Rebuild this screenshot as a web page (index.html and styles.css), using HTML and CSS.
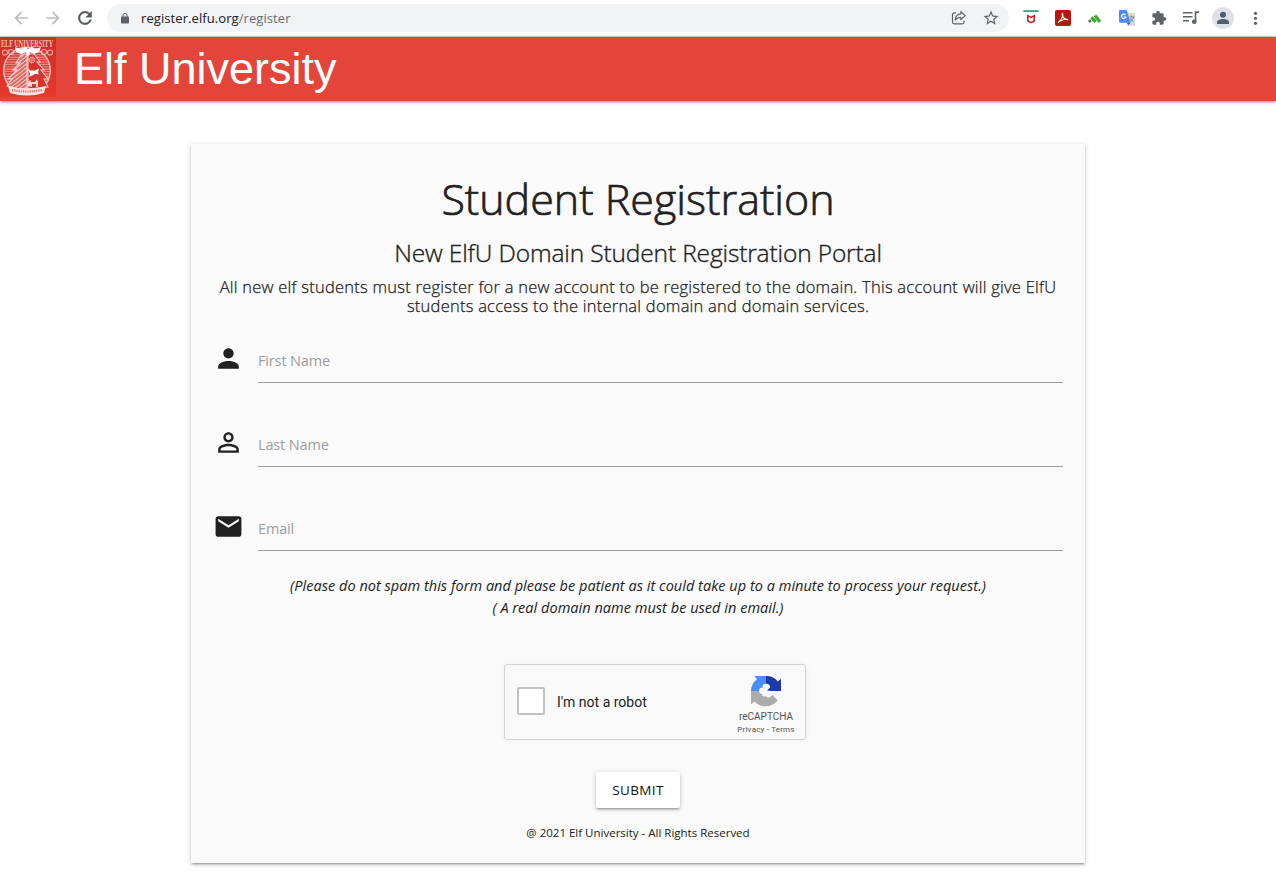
FILE: index.html
```html
<!DOCTYPE html>
<html lang="en">
<head>
<meta charset="utf-8">
<title>Elf University</title>
<link rel="stylesheet" href="styles.css">
</head>
<body>
<div class="toolbar">
  <div class="nav-buttons">
    <svg class="ic faded" viewBox="0 0 24 24"><path d="M20 11H7.83l5.59-5.59L12 4l-8 8 8 8 1.41-1.41L7.83 13H20v-2z"/></svg>
    <svg class="ic faded" viewBox="0 0 24 24"><path d="M12 4l-1.41 1.41L16.17 11H4v2h12.17l-5.58 5.59L12 20l8-8z"/></svg>
    <svg class="ic" viewBox="0 0 24 24"><path d="M17.65 6.35C16.2 4.9 14.21 4 12 4c-4.42 0-7.99 3.58-7.99 8s3.57 8 7.99 8c3.73 0 6.84-2.55 7.73-6h-2.08c-.82 2.33-3.04 4-5.65 4-3.31 0-6-2.69-6-6s2.69-6 6-6c1.66 0 3.14.69 4.22 1.78L13 11h7V4l-2.35 2.35z" stroke="#55595d" stroke-width=".5"/></svg>
  </div>
  <div class="omnibox">
    <svg class="lock" viewBox="0 0 24 24"><path d="M18 8h-1V6c0-2.76-2.24-5-5-5S7 3.24 7 6v2H6c-1.1 0-2 .9-2 2v10c0 1.1.9 2 2 2h12c1.1 0 2-.9 2-2V10c0-1.1-.9-2-2-2zM9 8V6c0-1.66 1.34-3 3-3s3 1.34 3 3v2H9z"/></svg>
    <div class="url">register.elfu.org<span>/register</span></div>
    <svg class="share" viewBox="0 0 16 16" fill="none" stroke="#5f6368" stroke-width="1.2" stroke-linejoin="round"><path d="M5 2.8H3.3A1.8 1.8 0 0 0 1.500 4.600V12a1.800 1.800 0 0 0 1.800 1.800h8A1.800 1.800 0 0 0 13.100 12v-1.500"/><path d="M9.800 1.700 14.300 5.600 9.800 9.500V7.300C7.200 7.300 5.500 8.100 4.200 10 4.500 6.500 6.500 4.200 9.800 3.900z"/></svg>
    <svg class="star" viewBox="0 0 24 24"><path d="M22 9.240l-7.190-.62L12 2 9.190 8.630 2 9.240l5.460 4.730L5.820 21 12 17.270 18.180 21l-1.630-7.030L22 9.240zM12 15.400l-3.760 2.270 1-4.280-3.320-2.880 4.380-.38L12 6.100l1.710 4.040 4.380.38-3.320 2.880 1 4.280L12 15.400z"/></svg>
  </div>
  <div class="extensions">
    <svg viewBox="0 0 16 16"><path fill="#43a58a" d="M.3.1h15.400v2H.3z"/><path fill="#c8202f" d="M4 4.500l4 2 4-2V11.500l-4 2-4-2zM5.600 7v3.600L8 11.800l2.400-1.200V7L8 8.200z"/></svg>
    <svg viewBox="0 0 16 16"><rect width="16" height="16" rx="2" fill="#b3190c"/><path d="M3.300 12.500C5.500 11 8.700 6 7.700 3.400c-1.300 0-.2 6.300 5.100 6.400 0-1.500-6.800-.2-9.500 2.700z" fill="none" stroke="#fff" stroke-width="1.100" stroke-linejoin="round"/></svg>
    <svg viewBox="0 0 16 16"><circle cx="2.800" cy="10.900" r="1.500" fill="#5b6b60"/><path d="M4.500 7.300 8.500 12M8 5.500l5 6.500" fill="none" stroke="#3caa2d" stroke-width="3.200"/></svg>
    <svg viewBox="0 0 16 16"><path fill="#d5d7da" d="M6.500 3H16v12.700H9z"/><path fill="#4c8bf5" d="M1 0h6.700l3.800 12.800H1A1 1 0 0 1 0 11.800V1a1 1 0 0 1 1-1z"/><path fill="#3457c4" d="M8 12.800h3.500L9 15.600z"/><path d="M6.500 5A2.200 2.200 0 1 0 6.800 7H4.800" fill="none" stroke="#fff" stroke-width="1.100"/><path d="M10.500 7h4.700M12.800 5.800V7M14.500 7q-.8 3-3.500 4.500M11.200 8.500q1 2 3.300 3.300" fill="none" stroke="#71828b" stroke-width=".9"/></svg>
    <svg viewBox="0 0 24 24"><path fill="#5f6368" d="M20.500 11H19V7c0-1.100-.9-2-2-2h-4V3.500C13 2.120 11.880 1 10.500 1S8 2.120 8 3.500V5H4c-1.100 0-1.990.9-1.990 2v3.800H3.500c1.490 0 2.700 1.210 2.700 2.700s-1.210 2.700-2.700 2.700H2V20c0 1.100.9 2 2 2h3.800v-1.500c0-1.490 1.210-2.700 2.700-2.700 1.490 0 2.700 1.210 2.700 2.700V22H17c1.100 0 2-.9 2-2v-4h1.500c1.380 0 2.500-1.120 2.500-2.500S21.880 11 20.500 11z"/></svg>
    <svg viewBox="0 0 16 16"><path d="M0 2.700h9.500M0 6.700h9.500M0 10.700h6" stroke="#5f6368" stroke-width="1.600"/><path d="M12.500 12V2.200H16" fill="none" stroke="#5f6368" stroke-width="1.700"/><circle cx="11.200" cy="11.800" r="2.300" fill="#5f6368"/></svg>
    <svg class="avatar" viewBox="0 0 22 22"><circle cx="11" cy="11" r="11" fill="#dee1e6"/><circle cx="11" cy="7.800" r="3" fill="#4f5d75"/><path fill="#4f5d75" d="M5 17v-1.600c0-2.200 3.500-3.300 6-3.300s6 1.100 6 3.300V17z"/></svg>
    <svg viewBox="0 0 16 16" fill="#5f6368"><circle cx="8.500" cy="3.300" r="1.600"/><circle cx="8.500" cy="8.300" r="1.600"/><circle cx="8.500" cy="13.300" r="1.600"/></svg>
  </div>
</div>

<header class="banner">
  <svg class="crest" viewBox="0 0 56 60">
    <defs>
      <linearGradient id="red" x1="0" y1="0" x2="0" y2="1"><stop offset="0" stop-color="#c92f29"/><stop offset="1" stop-color="#e8382b"/></linearGradient>
      <pattern id="hatch" width="3" height="3" patternUnits="userSpaceOnUse" patternTransform="rotate(-38)"><path d="M0 1.500h3" stroke="#fff" stroke-width="1.500" opacity=".75"/></pattern>
      <pattern id="lines" width="3" height="2.400" patternUnits="userSpaceOnUse"><path d="M0 1h3" stroke="#fff" stroke-width="1.100" opacity=".5"/></pattern>
    </defs>
    <rect width="56" height="60" fill="url(#red)"/>
    <text transform="translate(1 10) scale(.62 1)" class="crest-text">ELF UNIVERSITY</text>
    <g fill="none" stroke="#f3a8a2" stroke-width="1.200"><circle cx="5" cy="15.500" r="2.500"/><circle cx="11" cy="15" r="2.500"/><circle cx="50" cy="15.500" r="2.500"/><circle cx="44" cy="15" r="2.500"/></g>
    <circle cx="27" cy="33.500" r="23.300" fill="url(#lines)" stroke="#f5bdb8" stroke-width="1.400"/>
    <path d="M27 17h-5l-6 9h4l-7 7h4l-9 9h4l-5 7 12 3h8z" fill="#d9443c"/>
    <path d="M27 17h-5l-6 9h4l-7 7h4l-9 9h4l-5 7 12 3h8z" fill="url(#hatch)" stroke="#fbd5d1" stroke-width="1.100"/>
    <path d="M28 17h6l6 8h-3l7 8h-3l7 9h-4l4 8-20 2z" fill="#d4352d" stroke="#f9cbc7" stroke-width="1.100"/>
    <circle cx="32" cy="23" r="3" fill="#e8756d" stroke="#fbc6c1" stroke-width="1" stroke-dasharray="1.500 .8"/>
    <path d="M28 32l3 1.500h4l4-2-1 4 1 2-4-.8-3 2-3 1 1-3z" fill="#fff"/>
    <path d="M28 49v-4l2-2 1 2h4l2-3 1 3v5h-2v-3h-4v3z" fill="#fbd7d4"/>
    <path d="M15 10l6 2 5-2 2 2 4-2 3 2 6-2-2 5-5 2-4-2-2 3-2-3-5 2-5-2z" fill="#fff"/>
    <circle cx="28" cy="17" r="1.800" fill="#fff"/>
    <path d="M8 49q19 5 38 0l-2 7q-17 5-34 0z" fill="#fbe3e1"/>
    <path d="M12 53q15 3 30 0" fill="none" stroke="#e5766f" stroke-width="2.200" stroke-dasharray="1.300 .9"/>
  </svg>
  <div class="brand"><span class="brand-name">Elf University</span></div>
</header>

<main class="card">
  <h1>Student Registration</h1>
  <h2>New ElfU Domain Student Registration Portal</h2>
  <p class="intro"><span>All new elf students must register for a new account to be registered to the domain. This account will give ElfU</span> <span>students access to the internal domain and domain services.</span></p>
  <form class="fields">
    <div class="field">
      <svg viewBox="0 0 24 24"><path d="M12 12c2.210 0 4-1.790 4-4s-1.790-4-4-4-4 1.790-4 4 1.790 4 4 4zm0 2c-2.670 0-8 1.340-8 4v2h16v-2c0-2.660-5.330-4-8-4z"/></svg>
      <div class="input">First Name</div>
    </div>
    <div class="field">
      <svg viewBox="0 0 24 24"><path d="M12 5.900c1.160 0 2.100.94 2.100 2.100s-.94 2.100-2.100 2.100S9.900 9.160 9.900 8s.94-2.100 2.100-2.100m0 9c2.970 0 6.100 1.460 6.100 2.100v1.100H5.900V17c0-.64 3.130-2.100 6.100-2.100M12 4C9.790 4 8 5.790 8 8s1.790 4 4 4 4-1.790 4-4-1.790-4-4-4zm0 9c-2.670 0-8 1.340-8 4v3h16v-3c0-2.660-5.330-4-8-4z"/></svg>
      <div class="input">Last Name</div>
    </div>
    <div class="field">
      <svg viewBox="0 0 24 24"><path d="M20 4H4c-1.100 0-1.990.9-1.990 2L2 18c0 1.100.9 2 2 2h16c1.100 0 2-.9 2-2V6c0-1.100-.9-2-2-2zm0 4l-8 5-8-5V6l8 5 8-5v2z"/></svg>
      <div class="input">Email</div>
    </div>
  </form>
  <p class="note"><span>(Please do not spam this form and please be patient as it could take up to a minute to process your request.)</span> <span>( A real domain name must be used in email.)</span></p>
  <div class="captcha">
    <div class="checkbox"></div>
    <div class="captcha-label">I'm not a robot</div>
    <div class="captcha-brand">
      <svg viewBox="0 0 32 32">
        <path fill="#1c3aa9" d="M31 16V3.800l-3.200 2.600A15 15 0 0 0 16 1v7.800c2.500-.2 4 1.200 4.300 3.400L17 15.500 21 16z"/>
        <path fill="#4a8df8" d="M16 1H4.300l2.600 3.200A15 15 0 0 0 1 16h8.300c-.4-2 .8-3.600 3-3.500L15 15l-2.500-3c0-2 1.200-3.200 3.500-3.200z"/>
        <path fill="#ababab" d="M1 16v13.200l3.500-2.800A15 15 0 0 0 27.700 25.200L22.300 20c-1.500 2.500-4.500 3.300-6.300 1.200-2.200 1-4.500-.5-3.800-2.500-2 .2-3.100-1-2.900-2.700z"/>
      </svg>
      <div class="rc">reCAPTCHA</div>
      <div class="terms">Privacy - Terms</div>
    </div>
  </div>
  <button class="submit" type="button">SUBMIT</button>
  <p class="copyright">@ 2021 Elf University - All Rights Reserved</p>
</main>
</body>
</html>
```
FILE: styles.css
```css
* { box-sizing: border-box; }
body { margin: 0; height: 876px; overflow: hidden; background: #fff; color: #212121; font-family: "Open Sans", "Noto Sans", sans-serif; }
svg { display: block; flex: none; }
h1, h2, p { margin: 0; font-weight: 400; white-space: nowrap; }

.toolbar { display: flex; align-items: center; height: 37px; border-bottom: 1px solid #d0d2d4; }
.nav-buttons { display: flex; gap: 12px; padding-left: 11px; width: 107px; }
.ic { width: 20px; height: 20px; fill: #55595d; }
.faded { fill: #babcbe; }
.omnibox { display: flex; align-items: center; width: 902px; height: 28px; padding: 0 10px 0 12px; border-radius: 14px; background: #f1f3f4; }
.lock { width: 12px; height: 13px; margin-right: 1px; fill: #5f6368; }
.url { flex: 1; padding-left: 9px; font-size: 13px; line-height: 20px; letter-spacing: .08px; color: #202124; }
.url span { color: #6a6e72; }
.share { width: 16px; height: 16px; margin-right: 15px; }
.star { width: 18px; height: 18px; margin-right: -1px; fill: #5f6368; }
.extensions { display: flex; align-items: center; gap: 16px; padding-left: 14px; }
.extensions svg { width: 16px; height: 16px; }
.extensions .avatar { width: 22px; height: 22px; margin: 0 -3px; }

.banner { display: flex; height: 64px; background: #e3453b; box-shadow: 0 2px 2px rgba(0,0,0,.14), 0 3px 1px -2px rgba(0,0,0,.12), 0 1px 5px rgba(0,0,0,.2); }
.crest { width: 56px; height: 60px; }
.crest-text { font: 700 10px/1 "Liberation Serif", serif; fill: #f6bcb8; }
.brand { padding-left: 18px; font: 45px/64px "Liberation Sans", sans-serif; color: #fff; white-space: nowrap; }

.card { width: 894px; height: 719px; margin: 43px 0 0 191px; padding: 28px 20px 0; background: #fafafa; text-align: center; box-shadow: 0 2px 2px rgba(0,0,0,.14), 0 3px 1px -2px rgba(0,0,0,.12), 0 1px 5px rgba(0,0,0,.2); }
.intro span, .note span { display: block; }
h1 { font-weight: 300; font-size: 43px; line-height: 54px; -webkit-text-stroke: .7px #212121; }
h2 { margin-top: 12px; font-weight: 300; font-size: 24.500px; line-height: 30px; letter-spacing: -.14px; -webkit-text-stroke: .35px #212121; }
.intro { margin-top: 9px; font-weight: 300; font-size: 16.500px; line-height: 19px; letter-spacing: .24px; -webkit-text-stroke: .25px #212121; }
.fields { display: flex; flex-direction: column; gap: 36px; margin-top: 20px; padding-right: 2px; }
.field { display: flex; gap: 14px; height: 48px; padding-left: 2px; }
.field svg { width: 31px; height: 31px; margin-top: 8px; fill: #212121; }
.input { flex: 1; border-bottom: 1px solid #9e9e9e; text-align: left; font-size: 14.500px; line-height: 51px; letter-spacing: -.15px; color: #9e9e9e; }
.note { margin-top: 24px; font-size: 14.500px; line-height: 22px; letter-spacing: .03px; font-style: italic; }
.captcha { display: flex; align-items: center; width: 302px; height: 76px; margin: 45px 0 0 293px; padding-left: 12px; border: 1px solid #d3d3d3; border-radius: 3px; background: #f9f9f9; box-shadow: 0 0 4px 1px rgba(0,0,0,.04); font-family: Roboto, sans-serif; }
.checkbox { width: 28px; height: 28px; margin-top: -2px; border: 2px solid #c1c1c1; border-radius: 2px; background: #fff; }
.captcha-label { flex: 1; padding-left: 12px; text-align: left; font-size: 14px; color: #222; }
.captcha-brand { display: flex; flex-direction: column; align-items: center; width: 78px; height: 74px; padding-top: 10px; color: #555; white-space: nowrap; }
.captcha-brand svg { width: 32px; height: 32px; }
.rc { margin-top: 4px; font-size: 10px; line-height: 12px; }
.terms { font-size: 8px; line-height: 13px; letter-spacing: .2px; }
.submit { display: block; width: 84px; height: 36px; margin: 32px 0 0 385px; padding: 0; border: 0; border-radius: 2px; background: #fff; color: #111; font: 13.500px/36px "Open Sans", sans-serif; letter-spacing: .4px; box-shadow: 0 2px 2px rgba(0,0,0,.14), 0 3px 1px -2px rgba(0,0,0,.12), 0 1px 5px rgba(0,0,0,.2); }
.copyright { margin-top: 16px; font-size: 11.500px; line-height: 18px; }
```
